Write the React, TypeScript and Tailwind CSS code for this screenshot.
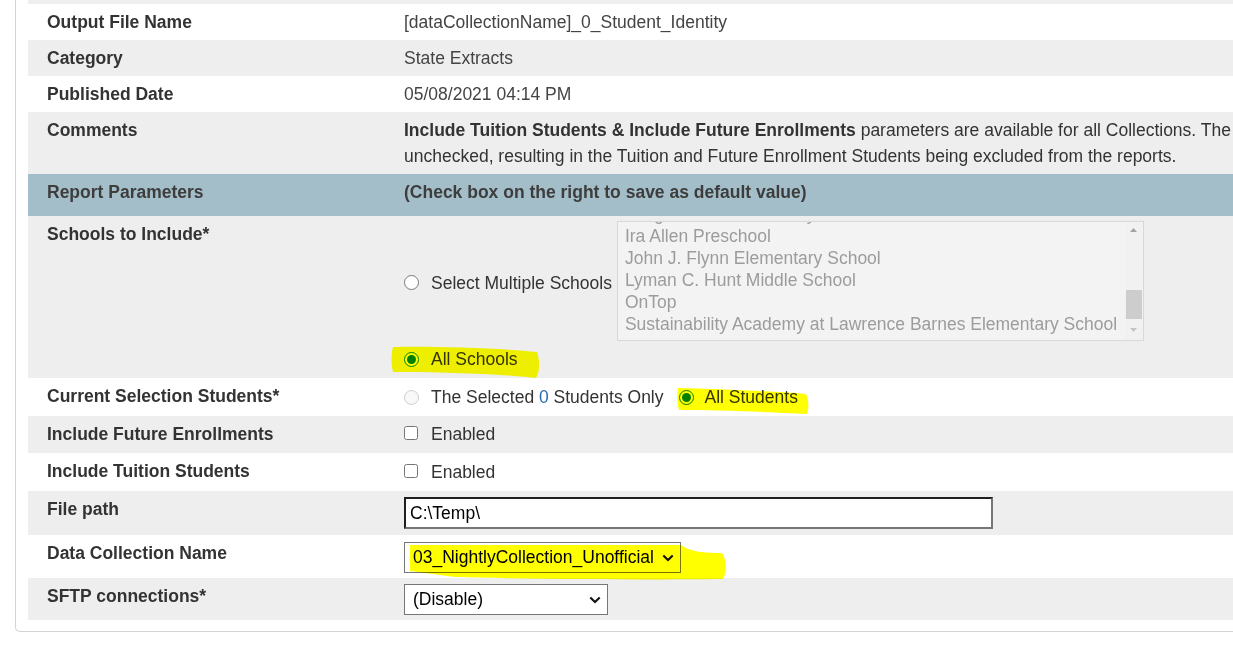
import React from "react";

function Chevron() {
  return (
    <svg width="12" height="8" viewBox="0 0 12 8" className="shrink-0">
      <path d="M1.3 1.5 L6 6 L10.7 1.5" fill="none" stroke="#111" strokeWidth="2.1" />
    </svg>
  );
}

function Row({
  label,
  gray,
  h,
  valueClass,
  children,
}: {
  label: React.ReactNode;
  gray?: boolean;
  h: string;
  valueClass?: string;
  children?: React.ReactNode;
}) {
  return (
    <div className={`flex ${h} ${gray ? "bg-[#eeeeee]" : "bg-white"}`}>
      <div className="w-[357px] shrink-0 pl-[19px] pt-[5px] leading-[26px] font-bold text-[#333333]">
        {label}
      </div>
      <div className={`flex-1 min-w-0 pl-[19px] ${valueClass ?? "pt-[5px] leading-[26px] text-[#444444]"}`}>
        {children}
      </div>
    </div>
  );
}

const schools = [
  "Integrated Arts Academy",
  "Ira Allen Preschool",
  "John J. Flynn Elementary School",
  "Lyman C. Hunt Middle School",
  "OnTop",
  "Sustainability Academy at Lawrence Barnes Elementary School",
];

function ListBox() {
  return (
    <div className="ml-[5px] flex h-[120px] w-[527px] border border-[#d8d8d8] bg-[#f3f3f3]">
      <div className="flex-1 min-w-0 overflow-hidden pl-[7px]">
        <div className="-mt-[19px] leading-[22px] text-[#9c9c9c] whitespace-nowrap">
          {schools.map((s) => (
            <div key={s}>{s}</div>
          ))}
        </div>
      </div>
      <div className="flex w-[18px] shrink-0 flex-col bg-[#f1f1f1]">
        <div className="flex h-[17px] items-center justify-center">
          <svg width="7" height="4" viewBox="0 0 7 4">
            <polygon points="0,4 3.5,0 7,4" fill="#a3a3a3" />
          </svg>
        </div>
        <div className="flex-1">
          <div className="mx-[1px] mt-[52px] h-[29px] bg-[#cdcdcd]" />
        </div>
        <div className="flex h-[22px] items-center justify-center">
          <svg width="7" height="4" viewBox="0 0 7 4">
            <polygon points="0,0 3.5,4 7,0" fill="#c4c4c4" />
          </svg>
        </div>
      </div>
    </div>
  );
}

export default function App() {
  return (
    <div className="relative h-[656px] w-[1233px] overflow-hidden bg-white font-['Liberation_Sans',Arial,sans-serif] text-[17.5px]">
      <div className="ml-[15px] w-[1500px] rounded-bl-[5px] border-b border-l border-[#d3d3d3] pb-[11px] pl-[12px]">
        <div className="h-[4px] bg-[#eeeeee]" />
        <Row label="Output File Name" h="h-[36px]">
          [dataCollectionName]_0_Student_Identity
        </Row>
        <Row label="Category" gray h="h-[36px]">
          State Extracts
        </Row>
        <Row label="Published Date" h="h-[36px]">
          05/08/2021 04:14 PM
        </Row>
        <Row label="Comments" gray h="h-[62px]" valueClass="pt-[5px] leading-[26px] text-[#333333]">
          <div className="whitespace-nowrap">
            <b>Include Tuition Students &amp; Include Future Enrollments</b> parameters are available for all
            Collections. The default values of these parameters are
          </div>
          <div className="whitespace-nowrap">
            unchecked, resulting in the Tuition and Future Enrollment Students being excluded from the reports.
          </div>
        </Row>

        <div className="flex h-[42px] bg-[#a3bec9] pt-[5px] font-bold leading-[26px] text-[#3d3d3d]">
          <div className="w-[357px] shrink-0 pl-[19px]">Report Parameters</div>
          <div className="flex-1 pl-[19px]">(Check box on the right to save as default value)</div>
        </div>

        <Row label="Schools to Include*" gray h="h-[162px]" valueClass="pt-[5px] text-[#333333]">
          <div className="flex h-[120px] items-center">
            <input type="radio" name="schools" className="m-0 mt-[2px] h-[15px] w-[15px] shrink-0" />
            <span className="ml-[12px] mt-[4px] whitespace-nowrap">Select Multiple Schools</span>
            <ListBox />
          </div>
          <div className="mt-[5px] flex h-[26px] items-center">
            <input
              type="radio"
              name="schools"
              defaultChecked
              className="m-0 h-[15px] w-[15px] shrink-0 accent-[#008000]"
            />
            <span className="ml-[12px]">All Schools</span>
          </div>
        </Row>

        <Row label="Current Selection Students*" h="h-[38px]" valueClass="pt-[6px] text-[#333333]">
          <div className="flex h-[26px] items-center whitespace-nowrap">
            <input type="radio" name="students" disabled className="m-0 h-[15px] w-[15px] shrink-0" />
            <span className="ml-[12px]">
              The Selected <span className="text-[#2b6cb0]">0</span> Students Only
            </span>
            <input
              type="radio"
              name="students"
              defaultChecked
              className="m-0 ml-[15px] h-[15px] w-[15px] shrink-0 accent-[#008000]"
            />
            <span className="ml-[11px]">All Students</span>
          </div>
        </Row>

        <Row label="Include Future Enrollments" gray h="h-[37px]" valueClass="pt-[4px] text-[#333333]">
          <div className="flex h-[26px] items-center">
            <input type="checkbox" className="m-0 h-[14px] w-[14px] shrink-0" />
            <span className="ml-[13px] mt-[2px]">Enabled</span>
          </div>
        </Row>

        <Row label="Include Tuition Students" h="h-[38px]" valueClass="pt-[5px] text-[#333333]">
          <div className="flex h-[26px] items-center">
            <input type="checkbox" className="m-0 h-[14px] w-[14px] shrink-0" />
            <span className="ml-[13px] mt-[2px]">Enabled</span>
          </div>
        </Row>

        <Row label="File path" gray h="h-[44px]" valueClass="pt-[6px]">
          <div className="flex h-[32px] w-[589px] items-center border-2 border-b-[#767676] border-l-[#1f1f1f] border-r-[#767676] border-t-[#1f1f1f] bg-white pl-[4px] text-black">
            C:\Temp\
          </div>
        </Row>

        <Row label="Data Collection Name" h="h-[43px]" valueClass="pt-[7px]">
          <div className="flex h-[31px] w-[277px] items-center justify-between border border-[#767676] bg-white pl-[8px] pr-[6px] text-black">
            <span className="whitespace-nowrap">03_NightlyCollection_Unofficial</span>
            <Chevron />
          </div>
        </Row>

        <Row label="SFTP connections*" gray h="h-[42px]" valueClass="pt-[6px]">
          <div className="flex h-[31px] w-[204px] items-center justify-between border border-[#767676] bg-white pl-[8px] pr-[6px] text-black">
            <span>(Disable)</span>
            <Chevron />
          </div>
        </Row>
      </div>

      <svg
        className="pointer-events-none absolute left-0 top-0 mix-blend-multiply"
        width="1233"
        height="656"
        viewBox="0 0 1233 656"
      >
        <path
          d="M393,347 C430,346 500,348 537,352 C540,360 540,372 536,378 C520,376 470,372 393,372 C391,364 391,354 393,347 Z"
          fill="#ffff00"
        />
        <path
          d="M678,388 C720,389 770,391 806,394 C809,401 809,409 807,414 C770,412 720,410 679,410 C677,403 677,395 678,388 Z"
          fill="#ffff00"
        />
        <path
          d="M410,545 L681,545 C690,552 705,553 722,553 C727,560 727,572 723,579 C650,580 520,579 455,577 C440,575 425,573 410,571 Z"
          fill="#ffff00"
        />
      </svg>
    </div>
  );
}
